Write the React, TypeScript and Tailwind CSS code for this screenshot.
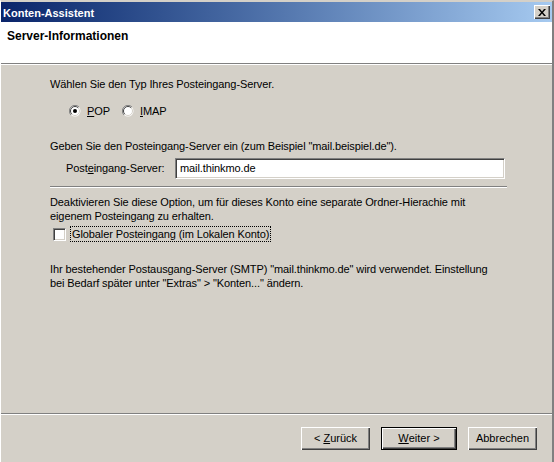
import React from "react";

function Radio({ checked }: { checked?: boolean }) {
  return (
    <svg width="12" height="12" viewBox="0 0 12 12" className="shrink-0">
      <circle cx="6" cy="6" r="5.5" fill="#ffffff" />
      <path d="M10 2 A5.5 5.5 0 0 0 2 10" fill="none" stroke="#808080" strokeWidth="1" />
      <path d="M9.2 2.8 A4.5 4.5 0 0 0 2.8 9.2" fill="none" stroke="#404040" strokeWidth="1" />
      <path d="M9.2 2.8 A4.5 4.5 0 0 1 2.8 9.2" fill="none" stroke="#d4d0c8" strokeWidth="1" />
      {checked && <circle cx="6" cy="6" r="2" fill="#000000" />}
    </svg>
  );
}

function Button({ children, primary }: { children: React.ReactNode; primary?: boolean }) {
  return (
    <div
      className={`h-[23px] flex items-center justify-center bg-[#d4d0c8] text-black shadow-[inset_1px_1px_0_#ffffff,inset_-1px_-1px_0_#404040,inset_-2px_-2px_0_#808080] ${
        primary ? "w-[76px] border border-black" : "w-[69px]"
      }`}
    >
      {children}
    </div>
  );
}

const sunken =
  "bg-white border-t border-l border-t-[#808080] border-l-[#808080] border-b border-r border-b-[#ffffff] border-r-[#ffffff] shadow-[inset_1px_1px_0_#404040,inset_-1px_-1px_0_#d4d0c8]";

export default function App() {
  return (
    <div
      className="w-[554px] h-[462px] bg-[#d4d0c8] flex flex-col text-[11px] text-black overflow-hidden border-r-2 border-r-[#808080] border-l border-l-[#ffffff] border-t border-t-[#d4d0c8]"
      style={{ fontFamily: '"Liberation Sans", Arial, sans-serif' }}
    >
      {/* title bar */}
      <div className="h-[20px] mt-[1px] flex items-center justify-between pl-[2px] pr-[2px] bg-gradient-to-r from-[#0a246a] to-[#a6caf0]">
        <span className="text-white font-bold text-[11px] leading-[14px] pt-[1px]">Konten-Assistent</span>
        <div className="w-[16px] h-[14px] bg-[#d4d0c8] flex items-center justify-center shadow-[inset_1px_1px_0_#ffffff,inset_-1px_-1px_0_#404040,inset_-2px_-2px_0_#808080]">
          <svg width="8" height="7" viewBox="0 0 8 7">
            <path d="M0 0h2l2 2.5L6 0h2L5 3.5 8 7H6L4 4.5 2 7H0l3-3.5z" fill="#000" />
          </svg>
        </div>
      </div>

      {/* header */}
      <div className="h-[42px] bg-white pl-[6px] pt-[6px] border-b border-b-[#808080] shadow-[0_1px_0_#ffffff]">
        <span className="font-bold text-[12px] leading-[14px]">Server-Informationen</span>
      </div>

      {/* body */}
      <div className="flex-1 flex flex-col pl-[49px] pr-[45px] pt-[13px] tracking-[-0.1px]">
        <div className="h-[14px] leading-[14px]">Wählen Sie den Typ Ihres Posteingang-Server.</div>
        <div className="flex items-center mt-[13px] pl-[19px] h-[14px] leading-[14px]">
          <Radio checked />
          <span className="ml-[6px] w-[35px]">
            <span className="underline">P</span>OP
          </span>
          <Radio />
          <span className="ml-[6px]">
            <span className="underline">I</span>MAP
          </span>
        </div>

        <div className="mt-[21px] h-[14px] leading-[14px]">
          Geben Sie den Posteingang-Server ein (zum Beispiel "mail.beispiel.de").
        </div>
        <div className="flex items-center mt-[5px] pl-[16px]">
          <span className="w-[109px]">
            Post<span className="underline">e</span>ingang-Server:
          </span>
          <div className={`w-[330px] h-[21px] flex items-center pl-[4px] ${sunken}`}>mail.thinkmo.de</div>
        </div>

        <div className="mt-[7px] h-[2px] border-t border-t-[#808080] border-b border-b-[#ffffff]" />

        <div className="mt-[7px] h-[14px] leading-[14px]">
          Deaktivieren Sie diese Option, um für dieses Konto eine separate Ordner-Hierachie mit
        </div>
        <div className="h-[14px] leading-[14px]">eigenem Posteingang zu erhalten.</div>
        <div className="flex items-center mt-[3px] pl-[3px]">
          <div className={`w-[13px] h-[13px] ${sunken}`} />
          <span className="ml-[4px] px-[1px] border border-dotted border-black leading-[14px]">
            Globaler Posteingang (im Lokalen Konto)
          </span>
        </div>

        <div className="mt-[20px] h-[14px] leading-[14px]">
          Ihr bestehender Postausgang-Server (SMTP) "mail.thinkmo.de" wird verwendet. Einstellung
        </div>
        <div className="h-[14px] leading-[14px]">
          bei Bedarf später unter "Extras" &gt; "Konten..." ändern.
        </div>
      </div>

      {/* footer */}
      <div className="h-[2px] border-t border-t-[#808080] border-b border-b-[#ffffff]" />
      <div className="h-[47px] flex items-start justify-end pt-[12px] pr-[15px] gap-[11px]">
        <Button>
          &lt; <span className="underline ml-[3px]">Z</span>urück
        </Button>
        <Button primary>
          <span className="underline">W</span>eiter &gt;
        </Button>
        <Button>Abbrechen</Button>
      </div>
    </div>
  );
}
